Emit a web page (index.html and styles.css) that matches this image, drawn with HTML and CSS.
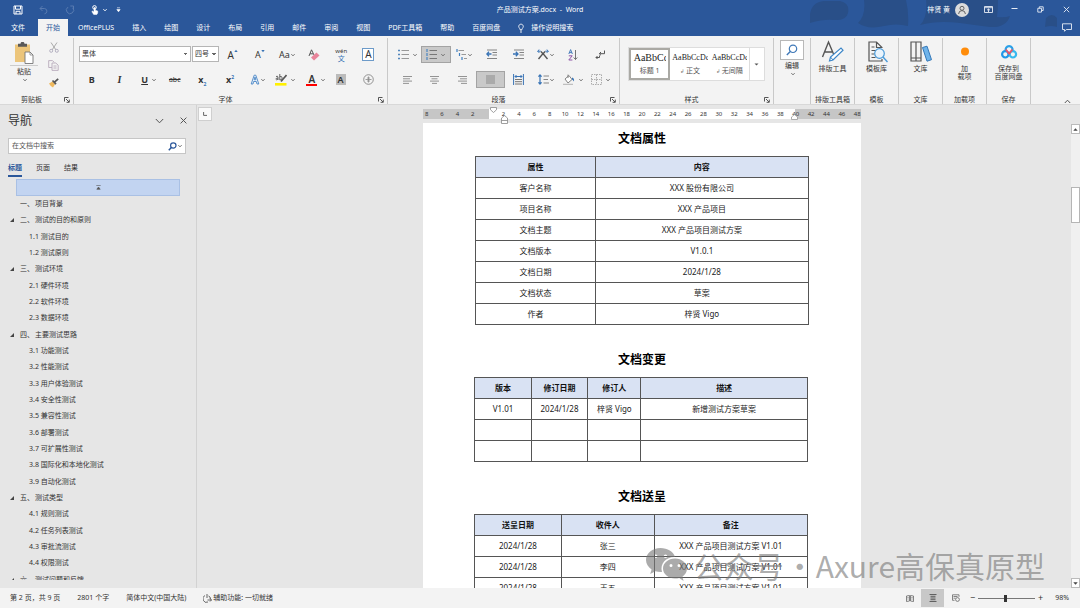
FILE: index.html
```html
<!DOCTYPE html>
<html lang="zh-CN">
<head>
<meta charset="utf-8">
<title>产品测试方案.docx - Word</title>
<link rel="stylesheet" href="styles.css">
</head>
<body>
<svg class="defs" aria-hidden="true">
  <symbol id="chev" viewBox="0 0 4 4"><path d="M0.4 1.2 2 2.8 3.6 1.2" fill="none" stroke="currentColor" stroke-width="1"/></symbol>
  <symbol id="launch" viewBox="0 0 6 6"><path d="M0.5 4.5V0.5H4.5M2 2l3 3M5.3 2.6V5.3H2.6" fill="none" stroke="#444" stroke-width=".9"/></symbol>
</svg>

<header class="titlebar">
  <svg class="clouds" viewBox="0 0 300 36" preserveAspectRatio="xMaxYMin slice" aria-hidden="true">
    <path d="M30 14q2-12 14-13h16q10 2 8 12q-2 8-14 7q-10-1-24 3zM84 0h42q3 12 2 26q-12-3-24 0q-16 4-26-3q8-8 6-23zM146 0h72q0 10-1 17q8 1 13-1q-4 12-20 11q-16-2-30-4q-22-3-40 2q8-8 6-25zM266 18q6-6 11 0v9q-6-2-12 0z" fill="#294f88"/>
  </svg>
  <div class="title-row">
    <div class="quick">
      <button class="qb" aria-label="保存"><svg width="10" height="10" viewBox="0 0 10 10"><path d="M1 1h8v8H1zM2.5 1v3.2h5V1M3 9V6.3h4V9" fill="none" stroke="#fff" stroke-width="1"/></svg></button>
      <button class="qb" aria-label="撤消"><svg width="10" height="10" viewBox="0 0 10 10"><path d="M3.5 1 1 3.5 3.5 6M1 3.5h4.500a3 2.700 0 0 1 0 5.300" fill="none" stroke="#587bb1" stroke-width="1"/></svg></button>
      <button class="qb" aria-label="恢复"><svg width="10" height="10" viewBox="0 0 10 10"><path d="M3 2.100A3.600 3.600 0 1 0 7.800 2.800M5.300 1H8.500V4.200" fill="none" stroke="#587bb1" stroke-width="1"/></svg></button>
      <button class="qb" aria-label="触摸模式"><svg width="8" height="10" viewBox="0 0 8 10"><circle cx="3.500" cy="2.400" r="1.800" fill="none" stroke="#fff"/><path d="M3 2.500h1.300v2.700l2.400.8v2L5.800 9.500H2.700L.8 6.600l.7-.5L3 7z" fill="#fff" stroke="#fff" stroke-width=".5"/></svg><svg class="chev"><use href="#chev"/></svg></button>
      <button class="qb custom" aria-label="自定义"><svg width="5" height="6" viewBox="0 0 5 6"><path d="M1 .8h3M.8 2.600h3.400L2.500 4.800z" stroke="#fff" stroke-width=".6" fill="#fff"/></svg></button>
    </div>
    <h1 class="doc-name">产品测试方案.docx&nbsp; -&nbsp; Word</h1>
    <div class="window-tools">
      <span class="user">梓贤 黄</span>
      <svg class="avatar" width="14" height="14" viewBox="0 0 14 14"><circle cx="7" cy="7" r="7" fill="#dcdcdc"/><circle cx="7" cy="5.300" r="2" fill="none" stroke="#555" stroke-width=".9"/><path d="M3.600 11q.2-3.400 3.400-3.400T10.400 11" fill="none" stroke="#555" stroke-width=".9"/></svg>
      <button class="wb" aria-label="功能区显示选项"><svg width="9" height="7" viewBox="0 0 9 7"><path d="M.5.500h8v6h-8zM.5 1.700h8M4.500 6V3M3 4.300 4.500 2.900 6 4.300" fill="none" stroke="#e6ecf5" stroke-width=".9"/></svg></button>
      <button class="wb" aria-label="最小化"><svg width="7" height="7" viewBox="0 0 7 7"><path d="M.5 2.500h6" stroke="#e6ecf5"/></svg></button>
      <button class="wb" aria-label="还原"><svg width="7" height="7" viewBox="0 0 7 7"><path d="M.8 2.300h3.700v3.800H.8zM2.300 2.200V.8h3.900v3.700H4.600" fill="none" stroke="#e6ecf5" stroke-width=".9"/></svg></button>
      <button class="wb" aria-label="关闭"><svg width="7" height="7" viewBox="0 0 7 7"><path d="m.8.8 5.400 5.400M6.200.8.8 6.200" stroke="#e6ecf5" stroke-width=".9"/></svg></button>
    </div>
  </div>
  <nav class="tabs">
    <button class="tab file">文件</button>
    <button class="tab active">开始</button>
    <button class="tab">OfficePLUS</button>
    <button class="tab">插入</button>
    <button class="tab">绘图</button>
    <button class="tab">设计</button>
    <button class="tab">布局</button>
    <button class="tab">引用</button>
    <button class="tab">邮件</button>
    <button class="tab">审阅</button>
    <button class="tab">视图</button>
    <button class="tab">PDF工具箱</button>
    <button class="tab">帮助</button>
    <button class="tab">百度网盘</button>
    <button class="tab tell"><svg width="6" height="10" viewBox="0 0 6 10"><path d="M2 6.700Q1.900 5.600 1.100 4.700A2.300 2.300 0 1 1 4.900 4.700Q4.100 5.600 4 6.700zM2 8h2M2.300 9.300h1.400" fill="none" stroke="#fff" stroke-width=".8"/></svg>操作说明搜索</button>
    <button class="comment" aria-label="批注"><svg width="10" height="9" viewBox="0 0 10 9"><path d="M.5.800h9v5.700H4.300L2.500 8.300V6.500h-2z" fill="none" stroke="#e6ecf5" stroke-width=".9"/></svg></button>
  </nav>
</header>

<section class="ribbon">
  <div class="group g-clip">
    <div class="body clip">
      <button class="paste"><svg width="20" height="22" viewBox="0 0 20 22"><path d="M1 2.500h15V20H1z" fill="#ecc57a"/><path d="M4 1.800h2.500a2 2 0 0 1 4 0H13V4.800H4z" fill="#595959"/><path d="M11 10h5l3 3v8.500h-8z" fill="#fff" stroke="#777" stroke-width=".9"/><path d="M16 10v3h3" fill="none" stroke="#777" stroke-width=".7"/></svg><span class="paste-text">粘贴</span><svg class="chev"><use href="#chev"/></svg></button>
      <div class="clip-side">
        <button class="ib" aria-label="剪切"><svg width="10" height="11" viewBox="0 0 10 11"><path d="M2 .5 7 8M8 .5 3 8" stroke="#a9a9a9" stroke-width="1"/><circle cx="2.200" cy="8.800" r="1.500" fill="none" stroke="#b4b0c0"/><circle cx="7.800" cy="8.800" r="1.500" fill="none" stroke="#b4b0c0"/></svg></button>
        <button class="ib" aria-label="复制"><svg width="11" height="11" viewBox="0 0 11 11"><path d="M4 7.500H.7V.6h3.800l1.700 1.700M4 3h3.800l2.400 2.200v5.200H4zM5.500 6h3M5.500 8h3" fill="none" stroke="#b8aabb" stroke-width=".9"/></svg></button>
        <button class="ib" aria-label="格式刷"><svg width="11" height="10" viewBox="0 0 11 10"><path d="M1 5.500 4.500 3.500 7 6.200 5 9.500Q2.500 8.500 1 5.500z" fill="#efb95e"/><path d="M4.500 2.500 8 6.200M6.500 4.200 10.200.8" stroke="#555" stroke-width="1.700"/></svg></button>
      </div>
    </div>
    <div class="label">剪贴板<svg class="launch"><use href="#launch"/></svg></div>
  </div>

  <div class="group g-font">
    <div class="body rows">
      <div class="row">
        <select class="combo font-name" aria-label="字体"><option>黑体</option></select>
        <select class="combo font-size" aria-label="字号"><option>四号</option></select>
        <button class="cell"><span class="ga">A</span><svg class="tip" width="4" height="4" viewBox="0 0 4 4"><path d="M.3 3 2 .8 3.700 3z" fill="#3873b5"/></svg></button>
        <button class="cell"><span class="ga sm">A</span><svg class="tip" width="4" height="4" viewBox="0 0 4 4"><path d="M.3 1 2 3.200 3.700 1z" fill="#3873b5"/></svg></button>
        <button class="cell"><span class="ga sm">Aa</span><svg class="chev"><use href="#chev"/></svg></button>
        <button class="cell" aria-label="清除格式"><svg width="12" height="12" viewBox="0 0 12 12"><path d="M1 7 3.500.8 6 6M2 4.800h3" fill="none" stroke="#555" stroke-width="1"/><path d="M3 8.500 8.500 3.500 11.500 6.500 6 11.500z" fill="#e8849a"/></svg></button>
        <button class="cell pin"><span>wén</span><b>文</b></button>
        <button class="cell"><span class="boxed">A</span></button>
      </div>
      <div class="row">
        <button class="cell"><b class="ch">B</b></button>
        <button class="cell"><i class="ch it">I</i></button>
        <button class="cell"><span class="ch un">U</span><svg class="chev far"><use href="#chev"/></svg></button>
        <button class="cell"><s class="abc">abc</s></button>
        <button class="cell"><b class="sx">x<sub>2</sub></b></button>
        <button class="cell"><b class="sx">x<sup>2</sup></b></button>
        <button class="cell"><svg width="10" height="11" viewBox="0 0 10 11"><path d="M1.200 10 4.200 1.200h1.600L8.800 10H7L6.300 7.500H3.600L3 10zM4.200 5.800h1.600L5 3z" fill="#eaf2fb" stroke="#4a86c5" stroke-width=".9"/></svg><svg class="chev"><use href="#chev"/></svg></button>
        <button class="cell" aria-label="突出显示"><svg width="12" height="13" viewBox="0 0 12 13"><path d="M1 3.500q2-1 2 1V7M3 5Q.8 5 .9 6.200T3 6M4.800 1v6q2.400 0 2.400-2t-2.400-1.500" fill="none" stroke="#555" stroke-width=".9"/><path d="M11.500 2 6 8.500" stroke="#555" stroke-width="1.600"/><path d="M0 10h11.500v2.600H0z" fill="#fff000"/></svg><svg class="chev far"><use href="#chev"/></svg></button>
        <button class="cell" aria-label="字体颜色"><span class="red">A</span><svg class="chev far"><use href="#chev"/></svg></button>
        <button class="cell"><span class="shade">A</span></button>
        <button class="cell" aria-label="带圈字符"><svg width="11" height="11" viewBox="0 0 11 11"><circle cx="5.500" cy="5.500" r="4.800" fill="none" stroke="#888" stroke-width=".9"/><path d="M5.500 2.500v6M2.500 5.500h6M4 4h3M4 7h3" stroke="#888" stroke-width=".8"/></svg></button>
      </div>
    </div>
    <div class="label">字体<svg class="launch"><use href="#launch"/></svg></div>
  </div>

  <div class="group g-para">
    <div class="body rows">
      <div class="row">
        <button class="cell" aria-label="项目符号"><svg width="11" height="11" viewBox="0 0 11 11"><path d="M0 1.500h2M0 5.500h2M0 9.500h2" stroke="#5487bd" stroke-width="1.600"/><path d="M3.500 1.500H11M3.500 5.500H11M3.500 9.500H11" stroke="#999"/></svg><svg class="chev far"><use href="#chev"/></svg></button>
        <button class="cell on" aria-label="编号"><svg width="11" height="11" viewBox="0 0 11 11"><path d="M1 0v3M1 4v3M1 8v3" stroke="#3f7fc0" stroke-width="1.100"/><path d="M3.500 1.500H11M3.500 5.500H11M3.500 9.500H11" stroke="#777"/></svg><svg class="chev far"><use href="#chev"/></svg></button>
        <button class="cell" aria-label="多级列表"><svg width="11" height="11" viewBox="0 0 11 11"><path d="M1 0v3M3.500 4v3M6 8v3" stroke="#3f7fc0" stroke-width="1.200"/><path d="M2.500 1.500H8M5.500 5.500H10M8 9.500h3" stroke="#999"/></svg><svg class="chev"><use href="#chev"/></svg></button>
        <button class="cell" aria-label="减少缩进"><svg width="11" height="11" viewBox="0 0 11 11"><path d="M1 1h10M6.500 3.500H11M6.500 6H11M1 9.500h10" stroke="#777" stroke-width=".9"/><path d="M5.500 5H1M3 2.800.8 5 3 7.200" fill="none" stroke="#3873b5" stroke-width="1.300"/></svg></button>
        <button class="cell" aria-label="增加缩进"><svg width="11" height="11" viewBox="0 0 11 11"><path d="M1 1h10M6.500 3.500H11M6.500 6H11M1 9.500h10" stroke="#777" stroke-width=".9"/><path d="M0 5h4.500M2.800 2.800 5 5 2.800 7.200" fill="none" stroke="#3873b5" stroke-width="1.300"/></svg></button>
        <button class="cell" aria-label="中文版式"><svg width="12" height="11" viewBox="0 0 12 11"><path d="M1.500 10 6 4.500 10.500 10M4 2.500 6 5 8 2.500" fill="none" stroke="#555" stroke-width="1.400"/><path d="M.8 2.200h3M2.300.5.600 2.200l1.700 1.700M11.200 2.200h-3M9.700.5l1.700 1.700-1.700 1.700" fill="none" stroke="#3873b5" stroke-width="1"/></svg><svg class="chev"><use href="#chev"/></svg></button>
        <button class="cell" aria-label="排序"><svg width="10" height="12" viewBox="0 0 10 12"><path d="M.8 5 2.600.6 4.400 5M1.400 3.600h2.400" fill="none" stroke="#3873b5" stroke-width=".9"/><path d="M.8 6.800h3.400L.8 11h3.600" fill="none" stroke="#8f58a8" stroke-width="1"/><path d="M7.500 1v9.500M5.700 8.500l1.800 2 1.800-2" fill="none" stroke="#666" stroke-width=".9"/></svg></button>
        <button class="cell" aria-label="显示编辑标记"><svg width="11" height="10" viewBox="0 0 11 10"><path d="M9.500.5v3.200H4.500M6 2 4.300 3.700 6 5.300M4.500 5.500v2H1M2.500 6 1 7.500 2.500 9" fill="none" stroke="#555" stroke-width="1"/></svg></button>
      </div>
      <div class="row">
        <button class="cell" aria-label="左对齐"><svg width="9" height="8" viewBox="0 0 9 8"><path d="M0 .5h9M0 2.800h7M0 5.100h9M0 7.400h6" stroke="#888" stroke-width=".9"/></svg></button>
        <button class="cell" aria-label="居中"><svg width="9" height="8" viewBox="0 0 9 8"><path d="M0 .5h9M1.500 2.800h6M0 5.100h9M2 7.400h5" stroke="#888" stroke-width=".9"/></svg></button>
        <button class="cell" aria-label="右对齐"><svg width="9" height="8" viewBox="0 0 9 8"><path d="M0 .5h9M2 2.800h7M0 5.100h9M3 7.400h6" stroke="#888" stroke-width=".9"/></svg></button>
        <button class="cell on" aria-label="两端对齐"><svg width="9" height="9" viewBox="0 0 9 9"><path d="M0 0h9v9H0z" fill="#aaa"/></svg></button>
        <button class="cell" aria-label="分散对齐"><svg width="11" height="11" viewBox="0 0 11 11"><path d="M.6 0v11M10.400 0v11" stroke="#3873b5" stroke-width="1"/><path d="M2 5.500h7M2 7.700h7M2 10h7" stroke="#666" stroke-width=".9"/><path d="M2 2.500h7M3.500 1 2 2.500 3.500 4M7.500 1 9 2.500 7.500 4" fill="none" stroke="#3873b5" stroke-width="1"/></svg></button>
        <button class="cell" aria-label="行距"><svg width="11" height="11" viewBox="0 0 11 11"><path d="M2 1v9M.4 2.700 2 1l1.600 1.700M.4 8.300 2 10l1.600-1.700" fill="none" stroke="#3873b5" stroke-width="1.200"/><path d="M5.500 2H11M5.500 5.500h4.500M5.500 9H11" stroke="#888"/></svg><svg class="chev"><use href="#chev"/></svg></button>
        <button class="cell" aria-label="底纹"><svg width="12" height="11" viewBox="0 0 12 11"><path d="M2 5 6 1.500 9 5.500 5 9zM5 4V.6" fill="#fff" stroke="#777" stroke-width=".9"/><path d="M9 3.500q2.500.5 2 4Q10 6 9 5.500z" fill="#3873b5"/><path d="M0 10.300h10" stroke="#aaa" stroke-width=".9"/></svg><svg class="chev far"><use href="#chev"/></svg></button>
        <button class="cell" aria-label="边框"><svg width="11" height="11" viewBox="0 0 11 11"><path d="M.5 .5h10v10H.5zM5.500.5v10M.5 5.500h10" fill="none" stroke="#999" stroke-width=".8" stroke-dasharray="1.500 1"/></svg><svg class="chev far"><use href="#chev"/></svg></button>
      </div>
    </div>
    <div class="label">段落<svg class="launch"><use href="#launch"/></svg></div>
  </div>

  <div class="group g-style">
    <div class="body gallery">
      <button class="style picked"><span class="sample big">AaBbC<em>c</em></span><span>标题 1</span></button>
      <button class="style"><span class="sample">AaBbCcD<em>c</em></span><span><small>↲</small> 正文</span></button>
      <button class="style"><span class="sample">AaBbCcD<em>c</em></span><span><small>↲</small> 无间隔</span></button>
      <button class="more" aria-label="更多样式"><svg width="5" height="3" viewBox="0 0 5 3"><path d="M.5.500h4L2.500 2.500z" fill="#555"/></svg></button>
    </div>
    <div class="label">样式<svg class="launch"><use href="#launch"/></svg></div>
  </div>

  <div class="group g-edit">
    <div class="body">
      <button class="edit"><span class="find"><svg width="12" height="12" viewBox="0 0 12 12"><circle cx="7" cy="4.800" r="3.700" fill="none" stroke="#4079b8" stroke-width="1.200"/><path d="M4.300 7.500.8 11" stroke="#4079b8" stroke-width="1.400"/></svg></span>编辑<svg class="chev"><use href="#chev"/></svg></button>
    </div>
  </div>

  <div class="group g-big">
    <div class="body"><button class="big-btn"><svg width="24" height="24" viewBox="0 0 24 24"><path d="M1.500 17 7.500 2 12.500 14M4 12h7" fill="none" stroke="#555" stroke-width="1.400"/><path d="m8.500 21 1-4L20 8l2 2.200L12 20z" fill="#fff" stroke="#3c86c8" stroke-width="1.200"/><path d="m9.500 17 2.500 3" stroke="#3c86c8"/></svg>排版工具</button></div>
    <div class="label">排版工具箱</div>
  </div>
  <div class="group g-big">
    <div class="body"><button class="big-btn"><svg width="24" height="24" viewBox="0 0 24 24"><path d="M17 8v-.500L11.500 2H4v19h13v-2M11.500 2v5.500H17M6.500 7h3M6.500 10.500h5M6.500 14h3M6.500 17.500h4" fill="none" stroke="#555" stroke-width="1.200"/><circle cx="14.500" cy="13.500" r="4.800" fill="#eaf4fc" stroke="#4a9ad8" stroke-width="1.200"/><path d="m18 17 4.500 5" stroke="#4a9ad8" stroke-width="1.400"/></svg>模板库</button></div>
    <div class="label">模板</div>
  </div>
  <div class="group g-big">
    <div class="body"><button class="big-btn"><svg width="24" height="24" viewBox="0 0 24 24"><path d="M2 2h10v19H2zM7 2v19M2 18h10" fill="none" stroke="#555" stroke-width="1.200"/><path d="m13.500 7.500 4.500-1.300 4.500 13.500-4.500 1.500z" fill="#70b4ea" stroke="#3478b8" stroke-width="1"/></svg>文库</button></div>
    <div class="label">文库</div>
  </div>
  <div class="group g-big">
    <div class="body"><button class="big-btn"><svg width="24" height="24" viewBox="0 0 24 24"><circle cx="12" cy="11.500" r="4" fill="#ff8c0a"/></svg>加<br>载项</button></div>
    <div class="label">加载项</div>
  </div>
  <div class="group g-big">
    <div class="body"><button class="big-btn"><svg width="24" height="24" viewBox="0 0 24 24"><g fill="none" stroke-width="2.200"><path d="M8.800 10.800a3.500 3.500 0 1 1 6.600 0" stroke="#2aa0e8"/><circle cx="8.300" cy="14.300" r="3.200" stroke="#2196e8"/><circle cx="15.900" cy="14.300" r="3.200" stroke="#36b8ee"/><path d="M8.800 9.500 12.100 13.500 15.400 9.500" stroke="#ee5366" stroke-width="1.800"/></g></svg>保存到<br>百度网盘</button></div>
    <div class="label">保存</div>
  </div>
  <button class="collapse" aria-label="折叠功能区"><svg width="7" height="5" viewBox="0 0 7 5"><path d="M.8 4 3.500 1.200 6.200 4" fill="none" stroke="#555"/></svg></button>
</section>

<main class="work">
  <aside class="nav">
    <div class="nav-head">
      <h2>导航</h2>
      <button class="nb" aria-label="选项"><svg width="9" height="6" viewBox="0 0 9 6"><path d="m.8 1 3.700 3.800L8.200 1" fill="none" stroke="#555"/></svg></button>
      <button class="nb" aria-label="关闭导航"><svg width="7" height="7" viewBox="0 0 7 7"><path d="m.6.6 5.800 5.800M6.400.6.600 6.400" stroke="#555"/></svg></button>
    </div>
    <div class="search">
      <input type="text" aria-label="在文档中搜索" placeholder="在文档中搜索">
      <svg width="9" height="9" viewBox="0 0 9 9"><circle cx="5.300" cy="3.500" r="2.700" fill="none" stroke="#2b579a" stroke-width="1.200"/><path d="M3.300 5.600.8 8.200" stroke="#2b579a" stroke-width="1.500"/></svg>
      <svg class="chev"><use href="#chev"/></svg>
    </div>
    <div class="nav-tabs"><button class="nt current">标题</button><button class="nt">页面</button><button class="nt">结果</button></div>
    <div class="top-item"><svg width="5" height="5" viewBox="0 0 5 5"><path d="M.3.500h4.400M.8 4.300h3.400L2.500 2z" fill="#555" stroke="#555" stroke-width=".6"/></svg></div>
    <ul class="tree">
      <li class="l1"><span class="num">一、</span>项目背景</li>
      <li class="l1 open"><span class="num">二、</span>测试的目的和原则</li>
      <li>1.1 测试目的</li>
      <li>1.2 测试原则</li>
      <li class="l1 open"><span class="num">三、</span>测试环境</li>
      <li>2.1 硬件环境</li>
      <li>2.2 软件环境</li>
      <li>2.3 数据环境</li>
      <li class="l1 open"><span class="num">四、</span>主要测试思路</li>
      <li>3.1 功能测试</li>
      <li>3.2 性能测试</li>
      <li>3.3 用户体验测试</li>
      <li>3.4 安全性测试</li>
      <li>3.5 兼容性测试</li>
      <li>3.6 部署测试</li>
      <li>3.7 可扩展性测试</li>
      <li>3.8 国际化和本地化测试</li>
      <li>3.9 自动化测试</li>
      <li class="l1 open"><span class="num">五、</span>测试类型</li>
      <li>4.1 规则测试</li>
      <li>4.2 任务列表测试</li>
      <li>4.3 审批流测试</li>
      <li>4.4 权限测试</li>
      <li class="cut"><div class="l1 open"><span class="num">六、</span>测试问题和反馈</div></li>
    </ul>
  </aside>

  <div class="gutter"><button class="tabstop" aria-label="制表符"><svg width="4" height="4" viewBox="0 0 4 4"><path d="M.6 0v3.400H4" fill="none" stroke="#666"/></svg></button></div>

  <div class="canvas">
    <div class="ruler">
      <span>8</span><span>6</span><span>4</span><span>2</span><span></span><span>2</span><span>4</span><span>6</span><span>8</span><span>10</span><span>12</span><span>14</span><span>16</span><span>18</span><span>20</span><span>22</span><span>24</span><span>26</span><span>28</span><span>30</span><span>32</span><span>34</span><span>36</span><span>38</span><span>40</span><span>42</span><span>44</span><span>46</span><span>48</span>
      <svg class="mark first" width="7" height="6" viewBox="0 0 7 6"><path d="M.5.500h6v2.300l-3 2.700-3-2.700z" fill="#fff" stroke="#888" stroke-width=".8"/></svg>
      <svg class="mark left" width="7" height="9" viewBox="0 0 7 9"><path d="M3.500.600 6.500 3v5.500h-6V3zM.5 5.500h6" fill="#fff" stroke="#888" stroke-width=".8"/></svg>
      <svg class="mark right" width="7" height="6" viewBox="0 0 7 6"><path d="M3.500.600 6.500 3v2.500h-6V3z" fill="#fff" stroke="#999" stroke-width=".8"/></svg>
    </div>
    <article class="page">
      <h3>文档属性</h3>
      <table>
        <colgroup><col class="w36"><col></colgroup>
        <thead><tr><th>属性</th><th>内容</th></tr></thead>
        <tbody>
          <tr><td>客户名称</td><td>XXX 股份有限公司</td></tr>
          <tr><td>项目名称</td><td>XXX 产品项目</td></tr>
          <tr><td>文档主题</td><td>XXX 产品项目测试方案</td></tr>
          <tr><td>文档版本</td><td>V1.0.1</td></tr>
          <tr><td>文档日期</td><td>2024/1/28</td></tr>
          <tr><td>文档状态</td><td>草案</td></tr>
          <tr><td>作者</td><td>梓贤 Vigo</td></tr>
        </tbody>
      </table>
      <h3>文档变更</h3>
      <table class="log">
        <colgroup><col class="w17"><col class="w17"><col class="w16"><col></colgroup>
        <thead><tr><th>版本</th><th>修订日期</th><th>修订人</th><th>描述</th></tr></thead>
        <tbody>
          <tr><td>V1.01</td><td>2024/1/28</td><td>梓贤 Vigo</td><td>新增测试方案草案</td></tr>
          <tr><td></td><td></td><td></td><td></td></tr>
          <tr><td></td><td></td><td></td><td></td></tr>
        </tbody>
      </table>
      <h3>文档送呈</h3>
      <table class="log">
        <colgroup><col class="w26"><col class="w28"><col></colgroup>
        <thead><tr><th>送呈日期</th><th>收件人</th><th>备注</th></tr></thead>
        <tbody>
          <tr><td>2024/1/28</td><td>张三</td><td>XXX 产品项目测试方案 V1.01</td></tr>
          <tr><td>2024/1/28</td><td>李四</td><td>XXX 产品项目测试方案 V1.01</td></tr>
          <tr><td>2024/1/28</td><td>王五</td><td>XXX 产品项目测试方案 V1.01</td></tr>
        </tbody>
      </table>
    </article>
  </div>

  <div class="scroll">
    <button class="sb" aria-label="向上滚动"><svg width="5" height="3" viewBox="0 0 5 3"><path d="M.3 2.700h4.400L2.500.3z" fill="#444"/></svg></button>
    <div class="track"><div class="thumb"></div></div>
    <button class="sb" aria-label="向下滚动"><svg width="5" height="3" viewBox="0 0 5 3"><path d="M.3.300h4.400L2.500 2.700z" fill="#444"/></svg></button>
  </div>

  <div class="watermark">
    <svg width="41" height="34" viewBox="0 0 41 34"><path fill-rule="evenodd" d="M14.500 0C6.500 0 0 5.300 0 12c0 3.900 2.200 7.200 5.600 9.400L4.200 26l5.200-2.700q2.300.700 5.600.700h1C13.500 15 21 8.500 29 9 27.500 3.600 21.500 0 14.500 0zM9.700 6.500a1.800 1.800 0 1 1 0 3.600 1.800 1.800 0 0 1 0-3.600zm9.800 0a1.800 1.800 0 1 1 0 3.600 1.800 1.800 0 0 1 0-3.600z" fill="currentColor"/><path fill-rule="evenodd" d="M29 10.500c-6.700 0-12 4.500-12 10s5.300 10 12 10q2.300 0 4.200-.600L37.600 33l-1.200-4.300c2.700-1.900 4.600-4.800 4.600-8.200 0-5.500-5.300-10-12-10zm-4 5.600a1.500 1.500 0 1 1 0 3 1.500 1.500 0 0 1 0-3zm8 0a1.500 1.500 0 1 1 0 3 1.500 1.500 0 0 1 0-3z" fill="currentColor"/></svg>
    <span>公众号</span><span class="dot">·</span><span>Axure高保真原型</span>
  </div>
</main>

<footer class="status">
  <span>第 2 页，共 9 页</span>
  <span>2801 个字</span>
  <span>简体中文(中国大陆)</span>
  <span class="acc"><svg width="9" height="9" viewBox="0 0 9 9"><path d="M2 1.500A3.500 3.500 0 1 0 5 8M4 0v4M5.500 2q2 .5 2 3M4.500 6h4M7 4.500 8.500 6 7 7.500" fill="none" stroke="#555" stroke-width=".9"/></svg>辅助功能: 一切就绪</span>
  <div class="views">
    <button class="vb" aria-label="阅读视图"><svg width="8" height="7" viewBox="0 0 8 7"><path d="M.5 1 3.500.5v5.500L.5 6.500zM7.500 1 4.500.5v5.500l3 .5zM1.500 2.500h1M1.500 4h1M5.500 2.500h1M5.500 4h1" fill="none" stroke="#666" stroke-width=".8"/></svg></button>
    <button class="vb on" aria-label="页面视图"><svg width="8" height="8" viewBox="0 0 8 8"><path d="M.5.500h7M.5 7.500h7M1.500 2.300h5M1.500 4h5M1.500 5.700h5" stroke="#555" stroke-width=".9"/></svg></button>
    <button class="vb" aria-label="Web 版式"><svg width="8" height="8" viewBox="0 0 8 8"><path d="M.5.800h6.500v2M.5.800v5.500h2M1.500 2.500h4M1.500 4.200h2" fill="none" stroke="#666" stroke-width=".8"/><circle cx="5.500" cy="5.500" r="1.900" fill="none" stroke="#666" stroke-width=".8"/></svg></button>
    <button class="zb">−</button>
    <input class="zoom" type="range" min="10" max="190" value="98" aria-label="缩放">
    <button class="zb">+</button>
    <span class="pct">98%</span>
  </div>
</footer>
</body>
</html>
```
FILE: styles.css
```css
* { box-sizing: border-box; }
body {
  margin: 0;
  height: 100vh;
  display: flex;
  flex-direction: column;
  overflow: hidden;
  background: #e6e6e6;
  color: #333;
  font: 7px/10px "Noto Sans", "Noto Sans CJK SC", sans-serif;
}
button {
  margin: 0;
  padding: 0;
  border: 0;
  background: none;
  color: inherit;
  font: inherit;
  display: flex;
  align-items: center;
  justify-content: center;
}
h1, h2, h3, ul { margin: 0; padding: 0; }
svg { flex: none; display: block; }
.defs { position: absolute; width: 0; height: 0; }
.chev { width: 4px; height: 4px; margin-left: 1px; color: #666; }
.chev.far { margin-left: 4px; }

/* Title bar */
.titlebar { position: relative; background: #2b579a; color: #fff; }
.clouds { position: absolute; right: 0; top: 0; width: 300px; height: 36px; }
.title-row {
  position: relative;
  display: grid;
  grid-template-columns: 1fr auto 1fr;
  align-items: center;
  height: 19px;
}
.quick { display: flex; align-items: center; gap: 16px; padding-left: 13px; }
.quick .chev { color: #fff; margin-left: 4px; }
.custom { margin-left: -7px; }
.doc-name { font-size: 7px; font-weight: 400; }
.window-tools { display: flex; align-items: center; justify-content: flex-end; padding-right: 10px; }
.avatar { margin: 0 15px 0 5px; }
.wb { width: 8px; margin-left: 18px; }
.avatar + .wb { margin-left: 0; }
.tabs { position: relative; display: flex; height: 17px; }
.tab { padding: 0 9px; }
.tab.file { padding: 0 13px 0 11px; }
.tab.active { background: #f3f3f3; color: #2b579a; padding: 0 8px; }
.tab.active + .tab { padding-left: 10px; }
.tell { gap: 7px; }
.comment { margin-left: auto; padding-right: 8px; }

/* Ribbon */
.ribbon {
  display: flex;
  height: 69px;
  padding: 2px 0 0;
  background: #f3f3f3;
  border-bottom: 1px solid #d8d8d8;
}
.group { flex: none; display: flex; flex-direction: column; border-right: 1px solid #c9c9c9; }
.body { flex: 1; min-height: 0; }
.label { position: relative; height: 9px; line-height: 9px; text-align: center; white-space: nowrap; }
.launch { position: absolute; right: 3px; top: 2px; width: 6px; height: 6px; }
.g-clip { width: 74px; }
.g-clip .label { padding-right: 10px; }
.g-font { width: 314px; }
.g-font .label { padding-right: 10px; }
.g-para { width: 232px; }
.g-para .label { padding-right: 10px; }
.g-style { width: 154px; }
.g-style .label { padding-right: 10px; }
.g-edit { width: 37px; }
.g-big { width: 44px; }
.clip { display: flex; padding: 4px 0 0 10px; }
.paste { width: 28px; flex-direction: column; justify-content: flex-start; }
.paste-text { margin-top: 1px; border-top: 1px solid #ccc; width: 28px; line-height: 12px; }
.clip-side { display: flex; flex-direction: column; gap: 7px; padding-left: 10px; }
.rows { display: flex; flex-direction: column; gap: 8px; padding: 8px 5px 0 4px; }
.g-para .rows { padding-left: 6px; }
.row { display: flex; height: 17px; }
.cell { flex: 1 1 0; min-width: 0; }
.cell.on { background: #c9c9c9; border: 1px solid #a3a3a3; }
.combo {
  height: 16px;
  border: 1px solid #b5b5b5;
  border-radius: 0;
  background:
    linear-gradient(45deg, transparent 50%, #666 50%) right 4px center / 2px 2px no-repeat,
    linear-gradient(-45deg, transparent 50%, #666 50%) right 2px center / 2px 2px no-repeat,
    #fff;
  color: #333;
  font: inherit;
  padding: 0 2px;
  appearance: none;
}
.font-name { width: 112px; margin: 0 1px; }
.font-size { width: 27px; }
.ga { font-size: 10px; }
.ga.sm { font-size: 9px; }
.tip { align-self: flex-start; margin-top: 3px; }
.pin { flex-direction: column; line-height: 7px; font-size: 6px; }
.pin b { color: #3873b5; font-size: 7px; font-weight: 400; }
.boxed { border: 1px solid #6d9bc9; background: #fff; width: 12px; line-height: 11px; font-size: 10px; }
.ch { font-size: 9px; }
.it { font-family: "Liberation Serif", serif; font-size: 10px; font-weight: 700; }
.un { text-decoration: underline; font-weight: 700; padding-left: 3px; }
.abc { font-size: 7px; }
.sx { font-size: 9px; }
.sx sub, .sx sup { font-size: 5px; color: #3873b5; line-height: 0; }
.red { font-size: 10px; line-height: 10px; border-bottom: 2px solid #f00; width: 11px; font-weight: 600; margin-left: 6px; }
.shade { font-size: 9px; background: #bbb; width: 10px; line-height: 11px; font-weight: 600; }
.gallery {
  flex: none;
  display: flex;
  margin: 9px 8px auto 8px;
  height: 34px;
  background: #fff;
  border: 1px solid #ddd;
}
.style {
  flex: 1 1 0;
  min-width: 0;
  flex-direction: column;
  gap: 2px;
  color: #555;
  border: 1px solid transparent;
  overflow: hidden;
  white-space: nowrap;
}
.style.picked { border: 2px solid #aaa9a4; }
.style small { font-size: 5px; }
.sample { color: #222; font-family: "Liberation Serif", serif; font-size: 8px; line-height: 12px; }
.sample.big { font-size: 10px; }
.sample em { display: inline-block; width: 2px; overflow: hidden; vertical-align: bottom; font-style: normal; }
.more { width: 15px; border-left: 1px solid #ddd; }
.edit { flex-direction: column; margin: 2px auto 0; gap: 1px; }
.find { display: flex; justify-content: center; align-items: center; width: 24px; height: 20px; border: 1px solid #b8b8b8; background: #fff; }
.big-btn { flex-direction: column; width: 100%; padding-top: 2px; line-height: 8px; white-space: nowrap; }
.big-btn svg { margin-bottom: 1px; }
.collapse { margin: auto 9px 0 auto; }

/* Workspace */
.work { position: relative; flex: 1; min-height: 0; display: flex; }
.nav { flex: none; width: 197px; display: flex; flex-direction: column; border-right: 1px solid #d2d2d2; }
.nav-head { display: flex; align-items: center; height: 33px; padding: 0 9px 2px 8px; gap: 16px; }
.nav-head h2 { flex: 1; font-size: 12px; line-height: 16px; font-weight: 400; }
.search { display: flex; align-items: center; height: 16px; margin: 0 10px 0 8px; padding: 0 3px; background: #fff; border: 1px solid #c6c6c6; }
.search input { flex: 1; min-width: 0; border: 0; padding: 0; background: none; font: inherit; outline: 0; }
.search input::placeholder { color: #555; opacity: 1; }
.nav-tabs { display: flex; gap: 14px; padding: 8px 8px 1px; }
.nt { height: 15px; border-bottom: 2px solid transparent; padding-bottom: 2px; }
.nt.current { color: #2b579a; border-color: #2b579a; font-weight: 700; }
.top-item { display: flex; align-items: center; justify-content: center; height: 17px; margin: 1px 16px 0; background: #c2d4f1; border: 1px solid #a9c0e4; }
.tree { flex: 1; min-height: 0; display: flex; flex-direction: column; list-style: none; }
.tree li { flex: 1 1 0; min-height: 0; display: flex; align-items: center; padding-left: 29px; }
.tree .l1 { position: relative; padding-left: 20px; }
.num { width: 15px; }
.open::before { content: ""; position: absolute; left: 10px; top: calc(50% - 2px); border-left: 4px solid transparent; border-bottom: 4px solid #444; }
.tree .cut { align-items: flex-start; padding-left: 0; }
.cut .l1 { display: flex; align-items: flex-start; height: 8px; line-height: 16px; overflow: hidden; }
.cut .open::before { top: 6px; }
.gutter { flex: none; width: 16px; padding: 2px 0 0 1px; }
.tabstop { width: 14px; height: 14px; background: #fafafa; border: 1px solid #cfcfcf; }
.canvas { flex: 1; min-width: 0; display: flex; flex-direction: column; align-items: center; padding-top: 4px; }
.ruler {
  position: relative;
  flex: none;
  display: flex;
  justify-content: space-between;
  width: 51%;
  height: 10px;
  background: linear-gradient(90deg, #c6c6c6 15%, #fff 15% 85%, #c6c6c6 85%);
  font-size: 6px;
  line-height: 10px;
}
.ruler span { width: 7px; text-align: center; }
.mark { position: absolute; }
.mark.first { left: calc(16% - 3px); top: -2px; }
.mark.left { left: calc(18% - 1px); top: 6px; }
.mark.right { left: calc(85% - 4px); top: 5px; }
.page {
  flex: 1;
  min-height: 0;
  overflow: hidden;
  width: 51%;
  margin-top: 4px;
  padding: 7px 52px 0;
  background: #fff;
  color: #222;
}
.page h3 { font-size: 12px; line-height: 18px; text-align: center; color: #000; margin-bottom: 8px; }
.page table { width: 100%; table-layout: fixed; border-collapse: collapse; margin-bottom: 26px; font-size: 8px; line-height: 12px; }
.page th, .page td { height: 21px; padding: 0; border: 1px solid #555; text-align: center; font-weight: 400; }
.page th { background: #d9e2f3; color: #111; font-weight: 700; }
.page .log { margin-left: -1px; }
.w36 { width: 36%; }
.w17 { width: 17%; }
.w16 { width: 16%; }
.w26 { width: 26%; }
.w28 { width: 28%; }
.scroll { flex: none; width: 9px; margin-top: 19px; display: flex; flex-direction: column; background: #f0f0f0; }
.sb { height: 10px; background: #fff; border: 1px solid #bbb; }
.track { flex: 1; display: flex; flex-direction: column; }
.track::before { content: ""; flex: 0 0 12%; }
.thumb { flex: 0 0 8%; background: #fff; border: 1px solid #b5b5b5; }
.watermark {
  position: absolute;
  right: 35px;
  bottom: 3px;
  display: flex;
  align-items: center;
  color: rgba(120, 120, 120, .62);
  font: 30px/40px "Noto Sans CJK SC", sans-serif;
  white-space: nowrap;
  pointer-events: none;
}
.watermark svg { margin-right: 7px; }
.dot { width: 32px; text-align: center; }

/* Status bar */
.status { flex: none; display: flex; align-items: center; gap: 17px; height: 20px; padding-left: 10px; background: #f3f3f3; }
.acc { display: flex; align-items: center; gap: 1px; }
.views { margin-left: auto; align-self: stretch; display: flex; align-items: center; padding-right: 11px; }
.vb { width: 23px; height: 18px; }
.vb.on { background: #c8c8c8; }
.zb { width: 11px; font-size: 9px; }
.zoom { width: 57px; height: 10px; margin: 0; appearance: none; background: linear-gradient(#777, #777) center / 100% 1px no-repeat; }
.zoom::-webkit-slider-thumb { appearance: none; width: 3px; height: 7px; background: #333; }
.pct { width: 23px; text-align: right; }
```
